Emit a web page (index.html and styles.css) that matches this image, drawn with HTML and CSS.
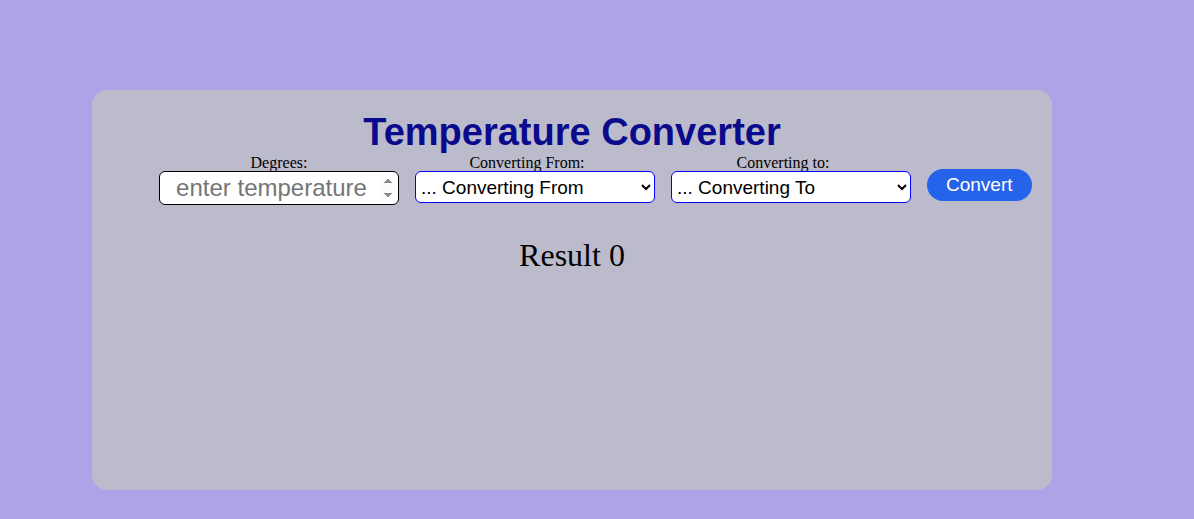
FILE: index.html
```html
<!DOCTYPE html>
<html>
<head>
<meta charset="utf-8">
<link rel="stylesheet" href="styles.css">
</head>
<body>
<div class="card">
  <h1 class="title">Temperature Converter</h1>
  <div class="row">
    <div class="group">
      <label class="lbl">Degrees:</label>
      <input class="deg" type="number" placeholder="enter temperature">
    </div>
    <div class="group">
      <label class="lbl lbl-sel">Converting From:</label>
      <select class="sel">
        <option>... Converting From</option>
        <option>Celsius</option>
        <option>Fahrenheit</option>
        <option>Kelvin</option>
      </select>
    </div>
    <div class="group">
      <label class="lbl lbl-sel">Converting to:</label>
      <select class="sel">
        <option>... Converting To</option>
        <option>Celsius</option>
        <option>Fahrenheit</option>
        <option>Kelvin</option>
      </select>
    </div>
    <button class="btn">Convert</button>
  </div>
  <div class="result">Result 0</div>
</div>
</body>
</html>
```
FILE: styles.css
```css
html, body {
  margin: 0;
  padding: 0;
  background: #ada4e7;
}
body {
  font-family: "Liberation Serif", "Times New Roman", serif;
  height: 519px;
  overflow: hidden;
}
.card {
  margin: 90px 0 0 92px;
  width: 960px;
  height: 400px;
  box-sizing: border-box;
  background: #bcbbcb;
  border-radius: 15px;
  padding-top: 21px;
}
.title {
  margin: 0;
  text-align: center;
  font-family: "Liberation Sans", Arial, sans-serif;
  font-weight: bold;
  font-size: 38px;
  line-height: 43px;
  color: #0a0a8c;
}
.row {
  display: flex;
  align-items: flex-start;
  gap: 16px;
  padding-left: 67px;
}
.group {
  display: flex;
  flex-direction: column;
  align-items: center;
  width: 240px;
}
.lbl {
  font-size: 16px;
  line-height: 17px;
  color: #000;
}
.lbl-sel {
  margin-right: 16px;
}
.deg {
  box-sizing: border-box;
  width: 240px;
  height: 34px;
  border: 1px solid #000;
  border-radius: 6px;
  background: #fff;
  font-family: "Liberation Sans", Arial, sans-serif;
  font-size: 24px;
  text-align: center;
  padding: 1px 2px;
}
.deg::placeholder {
  color: #757575;
}
.deg::-webkit-inner-spin-button {
  opacity: 1;
}
.sel {
  box-sizing: border-box;
  width: 240px;
  height: 32px;
  border: 1px solid #0000ff;
  border-radius: 6px;
  background: #fff;
  font-family: "Liberation Sans", Arial, sans-serif;
  font-size: 19px;
  color: #000;
  padding: 0 1px;
}
.btn {
  margin-top: 15px;
  height: 32px;
  padding: 0 19px;
  border: none;
  border-radius: 16px;
  background: #2563eb;
  color: #fff;
  font-family: "Liberation Sans", Arial, sans-serif;
  font-size: 19px;
}
.result {
  margin-top: 32px;
  text-align: center;
  font-size: 32px;
  line-height: 37px;
  color: #000;
}
```
